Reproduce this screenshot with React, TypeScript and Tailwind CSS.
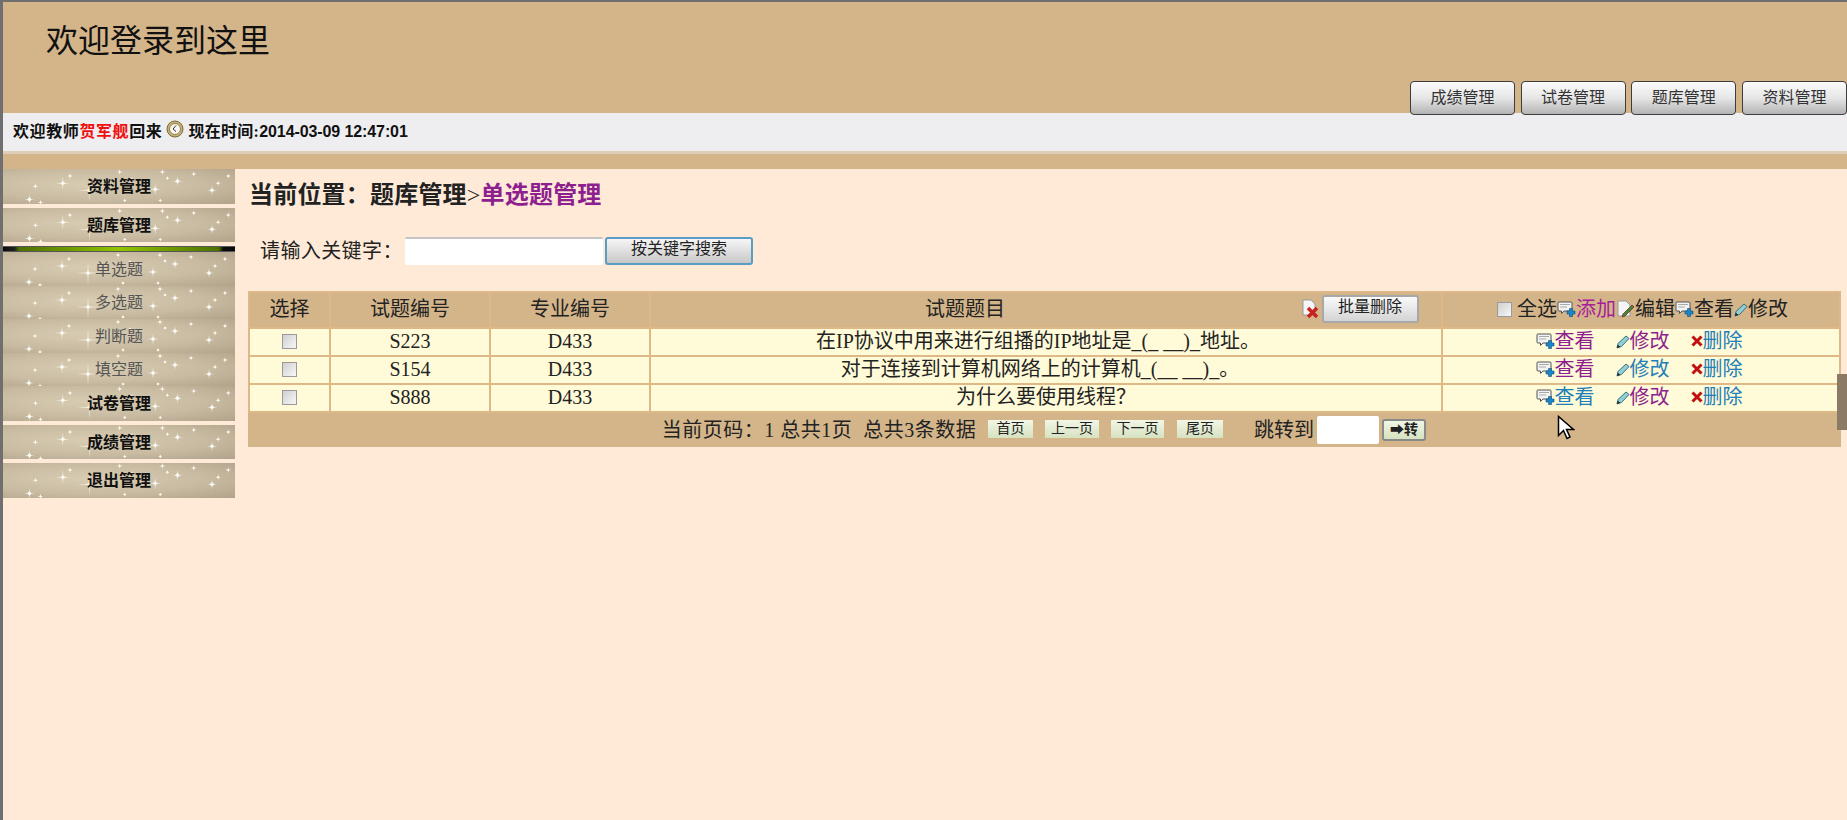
import clsx from 'clsx'

const topTabs = ['成绩管理', '试卷管理', '题库管理', '资料管理']

const rows = [
  { id: 'S223', major: 'D433', title: '在IP协议中用来进行组播的IP地址是_(_ __)_地址。', pad: 'pr-[16px]', links: [true, true, false] },
  { id: 'S154', major: 'D433', title: '对于连接到计算机网络上的计算机_(__ __)_。', pad: 'pr-[12px]', links: [true, false, false] },
  { id: 'S888', major: 'D433', title: '为什么要使用线程？', pad: '', links: [false, true, false] },
]

// x, y, size of each sparkle in the sidebar texture
const stars = [
  [59, 14, 7], [32, 17, 3], [26, 30, 5], [37, 33, 3], [66, 7, 3], [85, 21, 12], [115, 3, 3], [127, 10, 2],
  [150, 20, 6], [157, 3, 3.5], [162, 9, 2], [172, 12, 5], [188, 5, 3], [206, 21, 5], [212, 14, 3], [222, 7, 3],
  [155, 31, 2], [120, 31, 2],
]

function Sparkles() {
  return (
    <svg className="absolute inset-0 h-full w-full" viewBox="0 0 232 34" preserveAspectRatio="xMinYMin slice">
      {stars.map(([x, y, s], i) => (
        <path
          key={i}
          d={`M${x - s} ${y}L${x - 0.5} ${y - 0.5}L${x} ${y - s}L${x + 0.5} ${y - 0.5}L${x + s} ${y}L${x + 0.5} ${y + 0.5}L${x} ${y + s}L${x - 0.5} ${y + 0.5}Z`}
          fill="#fffdf2"
          opacity={0.9}
        />
      ))}
      {stars.map(([x, y, s], i) => (
        <circle key={i} cx={x} cy={y} r={s > 4 ? 1.8 : 1} fill="#fff" opacity={0.8} />
      ))}
    </svg>
  )
}

function SideItem({ label, sub, className }: { label: string; sub?: boolean; className?: string }) {
  return (
    <div
      className={clsx(
        'relative flex items-center justify-center overflow-hidden bg-[radial-gradient(ellipse_at_38%_45%,#d8ccb2_0%,#c8bba1_55%,#b0a389_100%)] pt-[2px]',
        sub ? 'h-[33.5px] text-[16px] text-[#555]' : 'h-[34.5px] text-[16px] font-bold text-[#111]',
        className,
      )}
    >
      <Sparkles />
      <span className="relative">{label}</span>
    </div>
  )
}

function ViewIcon() {
  return (
    <svg width="19" height="17" viewBox="0 0 19 17" className="shrink-0">
      <path d="M2 1h12a1 1 0 0 1 1 1v7a1 1 0 0 1-1 1H7l-2.5 2.5V10H2a1 1 0 0 1-1-1V2a1 1 0 0 1 1-1z" fill="#f3f3f3" stroke="#555" />
      <path d="M3 3.5h10M3 6h7" stroke="#aaa" />
      <path d="M12.5 7.5h3V10H18v3h-2.5v2.5h-3V13H10v-3h2.5z" fill="#1c86c8" stroke="#0d4f7a" strokeWidth="0.6" />
    </svg>
  )
}

function PencilIcon() {
  return (
    <svg width="14" height="15" viewBox="0 0 14 15" className="shrink-0">
      <path d="M10 2l3 2.5-7.5 8-4.5 1.5 1-4.5z" fill="#8fd0d8" stroke="#3d6f78" />
      <path d="M1 14l.8-3.2 2.4 2z" fill="#222" />
    </svg>
  )
}

function CrossIcon() {
  return (
    <svg width="12" height="12" viewBox="0 0 12 12" className="shrink-0">
      <path d="M1.5 1.5l9 9M10.5 1.5l-9 9" stroke="#c01010" strokeWidth="3" />
    </svg>
  )
}

function EditIcon() {
  return (
    <svg width="19" height="18" viewBox="0 0 19 18" className="shrink-0">
      <path d="M2 1h8l4 4v11H2z" fill="#f5f5f5" stroke="#999" />
      <path d="M16 5l2 2-9 9-3 1 1-3z" fill="#3f8a3a" stroke="#7a3020" strokeWidth="0.8" />
    </svg>
  )
}

function DocDeleteIcon() {
  return (
    <svg width="19" height="20" viewBox="0 0 19 20" className="mr-[1.5px] shrink-0">
      <path d="M2 1h8l4 4v11H2z" fill="#f5f5f5" stroke="#999" />
      <path d="M7 9l9 9M16 9l-9 9" stroke="#c8231e" strokeWidth="3.5" />
    </svg>
  )
}

function ClockIcon() {
  return (
    <svg width="20" height="18" viewBox="0 0 20 18" className="-mt-[6px] shrink-0">
      <circle cx="10" cy="9" r="8" fill="#c9b27a" stroke="#7c6a3a" />
      <circle cx="10" cy="9" r="5.5" fill="#f8f6ee" stroke="#8f8050" />
      <path d="M11 5.5L8 9l3 2.5" fill="none" stroke="#333" />
    </svg>
  )
}

function CheckBox() {
  return (
    <input
      type="checkbox"
      className="h-[15px] w-[15px] shrink-0 appearance-none border border-[#9a9a9a] bg-[linear-gradient(135deg,#d0d0d0,#f7f7f7)] align-middle"
    />
  )
}

function PagerButton({ label, className }: { label: string; className: string }) {
  return (
    <span
      className={clsx(
        '-mt-[2px] flex h-[18px] items-center justify-center bg-[linear-gradient(#f2f6e6,#d6e2c0)] text-[14px] leading-none text-[#222]',
        className,
      )}
    >
      {label}
    </span>
  )
}

const linkColor = (visited: boolean) => (visited ? 'text-[#8e1f8e]' : 'text-[#1f7fb8]')

export default function App() {
  return (
    <div
      className="relative flex h-screen flex-col overflow-hidden border-l-[3px] border-t-2 border-[#6f6f6f] bg-[#ffead8] text-[#222]"
      style={{ fontFamily: '"Liberation Serif", "Noto Sans CJK SC", serif' }}
    >
      <header className="flex h-[111px] flex-col justify-between bg-[#d4b58a]">
        <h1 className="ml-[43px] mt-[20px] text-[32px] leading-[38px] font-normal text-[#111]">欢迎登录到这里</h1>
        <nav className="relative z-10 -mb-[2px] flex justify-end gap-[5.7px]">
          {topTabs.map((tab) => (
            <span
              key={tab}
              className="flex h-[34px] w-[105px] items-center justify-center rounded-[4px] border border-[#3d3d3d] bg-[linear-gradient(#fbfbfb,#e6e6e6_50%,#b4b4b4)] text-[16px] text-[#333]"
            >
              {tab}
            </span>
          ))}
        </nav>
      </header>

      <div className="flex h-[38px] items-center gap-[3px] bg-[#eeeef0] pl-[10px] text-[16px] font-bold text-[#111]">
        <span className="tracking-[0.6px]">
          欢迎教师<span className="text-[#f01010]">贺军舰</span>回来
        </span>
        <ClockIcon />
        <span>
          <span className="tracking-[0.3px]">现在时间:</span>
          <span className="tracking-[-0.1px]" style={{ fontFamily: '"Liberation Sans", sans-serif' }}>
            2014-03-09 12:47:01
          </span>
        </span>
      </div>
      <div className="h-[18px] border-t-[3px] border-[#e0cfb8] bg-[#d4b58a]" />

      <div className="flex flex-1">
        <aside className="w-[232px] shrink-0">
          <SideItem label="资料管理" className="mb-[4px]" />
          <SideItem label="题库管理" className="mb-[4px]" />
          <div className="h-[6px] border-y border-[#555] bg-[linear-gradient(90deg,#0a0a0a_0%,#222_5%,#4f7000_7%,#93c400_50%,#4f7000_93%,#0a0a0a_95%)]" />
          <SideItem label="单选题" sub />
          <SideItem label="多选题" sub />
          <SideItem label="判断题" sub />
          <SideItem label="填空题" sub />
          <SideItem label="试卷管理" className="mb-[4px]" />
          <SideItem label="成绩管理" className="mb-[4px]" />
          <SideItem label="退出管理" />
        </aside>

        <main className="flex-1 pl-[13px] pr-[6px]">
          <h2 className="pl-[1px] pt-[12px] text-[24px] leading-[29px] font-bold tracking-[0.2px] text-[#222]">
            当前位置：题库管理<span className="font-normal">&gt;</span>
            <span className="text-[#8e1f8e]">单选题管理</span>
          </h2>

          <div className="mt-[27px] flex items-center pl-[12px]">
            <span className="w-[145px] text-[20px] leading-[28px] tracking-[0.4px] text-[#222]">请输入关键字：</span>
            <input className="h-[28px] w-[198px] rounded-[2px] border-t-2 border-[#c4c4c4] bg-white" />
            <span className="ml-[2px] flex h-[28px] w-[148px] items-start justify-center rounded-[3px] border-2 border-[#5b9cc4] bg-[linear-gradient(#f6f6f6,#c8c8c8)] text-[16px] leading-[20px] text-[#222]">
              按关键字搜索
            </span>
          </div>

          <table className="mt-[26px] w-full table-fixed border-collapse bg-[#d4b58a] text-center text-[20px] text-[#222]">
            <colgroup>
              <col className="w-[81px]" />
              <col className="w-[160px]" />
              <col className="w-[160px]" />
              <col className="w-[792px]" />
              <col />
            </colgroup>
            <thead>
              <tr className="h-[36px]">
                <th className="border-2 border-[#deb887] pb-[2px] font-normal">选择</th>
                <th className="border-2 border-[#deb887] pb-[2px] font-normal">试题编号</th>
                <th className="border-2 border-[#deb887] pb-[2px] font-normal">专业编号</th>
                <th className="relative border-2 border-[#deb887] pb-[2px] font-normal">
                  <span className="relative -left-[81px]">试题题目</span>
                  <span className="absolute left-[650px] top-[2px] flex items-center">
                    <DocDeleteIcon />
                    <span className="flex h-[28px] w-[97px] items-start justify-center rounded-[3px] border-2 border-[#a8a8a8] bg-[linear-gradient(#fafafa,#d4d4d4)] text-[16px] leading-[20px]">
                      批量删除
                    </span>
                  </span>
                </th>
                <th className="border-2 border-[#deb887] pb-[2px] font-normal">
                  <div className="flex items-center justify-center pl-[3px]">
                    <CheckBox />
                    <span className="ml-[5px]">全选</span>
                    <ViewIcon />
                    <span className="text-[#a5209a]">添加</span>
                    <EditIcon />
                    <span>编辑</span>
                    <ViewIcon />
                    <span>查看</span>
                    <PencilIcon />
                    <span>修改</span>
                  </div>
                </th>
              </tr>
            </thead>
            <tbody>
              {rows.map((row) => (
                <tr key={row.id} className="h-[28px] bg-[#fffad7] leading-[22px]">
                  <td className="border-2 border-[#deb887] pb-[2px]">
                    <div className="flex justify-center">
                      <CheckBox />
                    </div>
                  </td>
                  <td className="border-2 border-[#deb887] pb-[2px]">{row.id}</td>
                  <td className="border-2 border-[#deb887] pb-[2px]">{row.major}</td>
                  <td className={clsx('border-2 border-[#deb887] pb-[2px]', row.pad)}>{row.title}</td>
                  <td className="border-2 border-[#deb887] pb-[2px]">
                    <div className="flex h-[22px] items-center justify-center pr-[4px]">
                      <ViewIcon />
                      <span className={clsx('mr-[21px]', linkColor(row.links[0]))}>查看</span>
                      <PencilIcon />
                      <span className={clsx('mr-[21px]', linkColor(row.links[1]))}>修改</span>
                      <CrossIcon />
                      <span className={linkColor(row.links[2])}>删除</span>
                    </div>
                  </td>
                </tr>
              ))}
              <tr className="h-[35px]">
                <td colSpan={5} className="pb-[1px]">
                  <div className="flex h-[30px] items-center pl-[401px]">
                    <span className="w-[338px] whitespace-pre text-[20px] tracking-[0.5px]">当前页码：1 总共1页  总共3条数据</span>
                    <PagerButton label="首页" className="w-[45px]" />
                    <PagerButton label="上一页" className="ml-[12px] w-[54px]" />
                    <PagerButton label="下一页" className="ml-[12px] w-[53px]" />
                    <PagerButton label="尾页" className="ml-[13px] w-[46px]" />
                    <span className="ml-[31px] text-[20px]">跳转到</span>
                    <input className="ml-[3px] h-[28px] w-[62px] rounded-[2px] bg-white" />
                    <span className="ml-[3px] flex h-[22px] w-[44px] items-center justify-center rounded-[3px] border-2 border-[#8a8a8a] bg-[linear-gradient(#f2f6e6,#d6e2c0)] text-[14px] leading-none font-bold">
                      ➡转
                    </span>
                  </div>
                </td>
              </tr>
            </tbody>
          </table>
        </main>
      </div>

      <div className="absolute right-0 top-[372px] h-[56px] w-[10px] bg-[#8a7a66]" />
      <svg className="absolute left-[1554px] top-[413px]" width="18" height="25" viewBox="0 0 18 25">
        <path d="M1.5 1.5v19l5-5 3.5 8 3-1.5-3.5-7.500h7z" fill="#fff" stroke="#000" strokeWidth="1.5" />
      </svg>
    </div>
  )
}
